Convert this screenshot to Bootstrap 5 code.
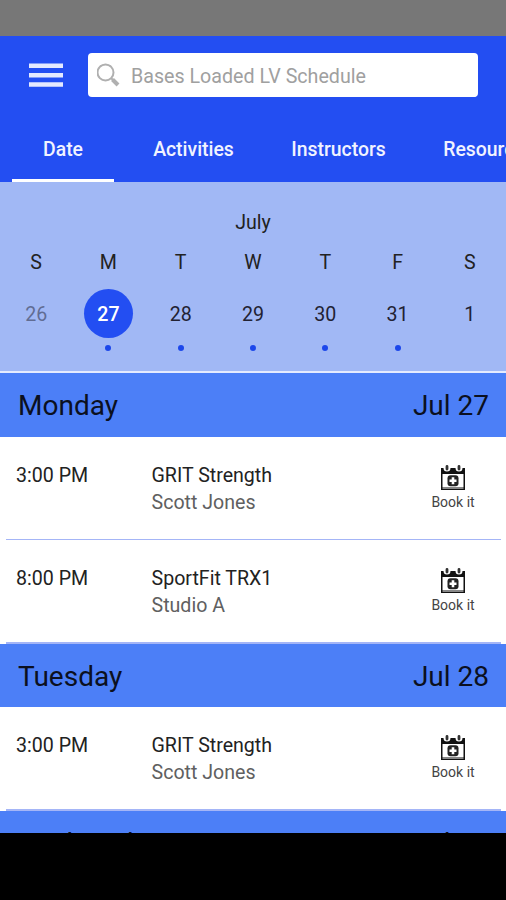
<!DOCTYPE html>
<html lang="en">
<head>
<meta charset="utf-8">
<meta name="viewport" content="width=device-width, initial-scale=1">
<title>Bases Loaded LV Schedule</title>
<link href="https://cdn.jsdelivr.net/npm/bootstrap@5.3.0/dist/css/bootstrap.min.css" rel="stylesheet">
<style>
body{font-family:Roboto,"Liberation Sans",sans-serif;font-size:19.6px;line-height:27px;color:#222;width:506px;height:900px;background:#000}
.status-strip{height:36px;background:#777}
.app-head{height:146px;background:#234ef2}
.head-bar{height:79px;padding:17px 28px 0 29px}
.menu-btn{width:34px;height:44px;margin-right:25px}
.search-box{height:44px;border-radius:4px;padding-left:9px}
.search-box input{font-size:19.65px;line-height:29px;padding:2px 0 0;margin-left:9px}
.search-box input::placeholder{color:#a0a0a0;opacity:1}
.tab-strip{height:67px;padding-left:12px}
.tab-strip .nav-link{height:67px;padding:21px 0 0;color:#f1f3ff;font-weight:500;font-size:19.4px;line-height:27px;border-bottom:3px solid transparent;text-align:center;flex:none;border-radius:0}
.tab-strip .nav-link.active{border-bottom-color:#fff}
.tab-date{width:102px}.tab-act{width:159px}.tab-inst{width:131px}.tab-res{width:170px}
.week-panel{height:189px;background:#a1b8f5;padding-top:27px}
.month-name{height:40px;line-height:28px}
.dow{height:32px;line-height:28px}
.day-num{width:49px;height:49px;border-radius:50%;line-height:51px;color:#223}
.day-num.picked{background:#234ef2;color:#fff;font-weight:500}
.event-dot{width:6px;height:6px;border-radius:50%;background:#1c47eb;margin-top:7px}
.agenda{height:462px;border-top:2px solid #e5ebff}
.day-head{height:63.5px;background:#4c7ff7;padding:0 17px 0 18px;font-size:28px;line-height:65px;color:#0b1020}
.slot{height:102px;padding:25px 30px 0 16px}
.slot-line{height:1.5px;margin:0 5px 0 6px;background:#a4b5f7}
.slot-time{width:135.5px}
.slot-sub{color:#606060}
.book{width:46px;font-size:14px;line-height:20px;padding-top:3px;color:#444}
.book svg{margin-bottom:2px}
.home-strip{height:67px;background:#000}
</style>
</head>
<body class="overflow-hidden">
<div class="status-strip"></div>
<header class="app-head">
  <div class="head-bar d-flex">
    <button class="menu-btn btn p-0 border-0 d-flex" aria-label="Menu">
      <svg width="34" height="44" viewBox="0 0 34 44"><path d="M0 12.800h34M0 22.200h34M0 31.500h34" stroke="#e4e9ff" stroke-width="4.400"/></svg>
    </button>
    <div class="search-box bg-white flex-grow-1 d-flex align-items-center">
      <svg class="flex-shrink-0" width="25" height="25" viewBox="0 0 25 25" fill="none" stroke="#b0b0b0"><circle cx="8.500" cy="9.500" r="8" stroke-width="2"/><path d="M14 15l3 3" stroke-width="2"/><path d="M15.500 16.500l5.500 5.500" stroke-width="4"/></svg>
      <input class="form-control border-0 bg-transparent shadow-none" type="text" placeholder="Bases Loaded LV Schedule">
    </div>
  </div>
  <nav class="tab-strip nav flex-nowrap overflow-hidden">
    <a class="nav-link tab-date active" href="#">Date</a>
    <a class="nav-link tab-act" href="#">Activities</a>
    <a class="nav-link tab-inst" href="#">Instructors</a>
    <a class="nav-link tab-res" href="#">Resources</a>
  </nav>
</header>
<section class="week-panel text-center">
  <div class="month-name">July</div>
  <div class="row g-0">
    <div class="col"><div class="dow">S</div></div>
    <div class="col"><div class="dow">M</div></div>
    <div class="col"><div class="dow">T</div></div>
    <div class="col"><div class="dow">W</div></div>
    <div class="col"><div class="dow">T</div></div>
    <div class="col"><div class="dow">F</div></div>
    <div class="col"><div class="dow">S</div></div>
  </div>
  <div class="row g-0 pt-2">
    <div class="col"><div class="day-num mx-auto opacity-50">26</div></div>
    <div class="col"><div class="day-num picked mx-auto">27</div><div class="event-dot mx-auto"></div></div>
    <div class="col"><div class="day-num mx-auto">28</div><div class="event-dot mx-auto"></div></div>
    <div class="col"><div class="day-num mx-auto">29</div><div class="event-dot mx-auto"></div></div>
    <div class="col"><div class="day-num mx-auto">30</div><div class="event-dot mx-auto"></div></div>
    <div class="col"><div class="day-num mx-auto">31</div><div class="event-dot mx-auto"></div></div>
    <div class="col"><div class="day-num mx-auto">1</div></div>
  </div>
</section>
<svg class="d-none">
  <symbol id="cal-add" viewBox="0 0 24 25">
    <path d="M0 3h2.500a3.500 3.500 0 0 0 7 0h5a3.500 3.500 0 0 0 7 0H24V25H0z" fill="#111"/>
    <path d="M1.500 9h21v13.500h-21z" fill="#fff"/>
    <path d="M1.500 23.500h21" stroke="#888" stroke-width="1"/>
    <path d="M6 1.500v2.500M18 1.500v2.500" stroke="#333" stroke-width="2.800" stroke-linecap="round"/>
    <rect x="6.500" y="10.300" width="11" height="11" rx="3" fill="#222"/>
    <path d="M12 12.300v7M8.500 15.800h7" stroke="#fff" stroke-width="2.600"/>
  </symbol>
</svg>
<main class="agenda bg-white overflow-hidden">
  <div class="day-head d-flex justify-content-between"><span>Monday</span><span>Jul 27</span></div>
  <div class="slot d-flex">
    <div class="slot-time">3:00 PM</div>
    <div class="flex-grow-1"><div>GRIT Strength</div><div class="slot-sub">Scott Jones</div></div>
    <div class="book text-center"><svg class="d-block mx-auto" width="24" height="25"><use href="#cal-add"/></svg>Book it</div>
  </div>
  <div class="slot-line"></div>
  <div class="slot d-flex">
    <div class="slot-time">8:00 PM</div>
    <div class="flex-grow-1"><div>SportFit TRX1</div><div class="slot-sub">Studio A</div></div>
    <div class="book text-center"><svg class="d-block mx-auto" width="24" height="25"><use href="#cal-add"/></svg>Book it</div>
  </div>
  <div class="slot-line"></div>
  <div class="day-head d-flex justify-content-between"><span>Tuesday</span><span>Jul 28</span></div>
  <div class="slot d-flex">
    <div class="slot-time">3:00 PM</div>
    <div class="flex-grow-1"><div>GRIT Strength</div><div class="slot-sub">Scott Jones</div></div>
    <div class="book text-center"><svg class="d-block mx-auto" width="24" height="25"><use href="#cal-add"/></svg>Book it</div>
  </div>
  <div class="slot-line"></div>
  <div class="day-head d-flex justify-content-between"><span>Wednesday</span><span>Jul 29</span></div>
</main>
<footer class="home-strip"></footer>
<script src="https://cdn.jsdelivr.net/npm/bootstrap@5.3.0/dist/js/bootstrap.bundle.min.js"></script>
</body>
</html>
